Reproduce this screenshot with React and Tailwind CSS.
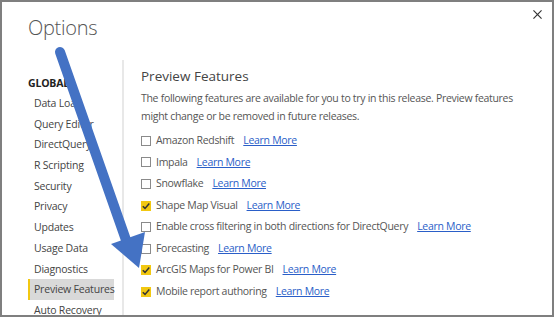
const navItems = [
  "Data Load",
  "Query Editor",
  "DirectQuery",
  "R Scripting",
  "Security",
  "Privacy",
  "Updates",
  "Usage Data",
  "Diagnostics",
  "Preview Features",
  "Auto Recovery"
];

const features = [
  { label: "Amazon Redshift", checked: false },
  { label: "Impala", checked: false },
  { label: "Snowflake", checked: false },
  { label: "Shape Map Visual", checked: true },
  { label: "Enable cross filtering in both directions for DirectQuery", checked: false },
  { label: "Forecasting", checked: false },
  { label: "ArcGIS Maps for Power BI", checked: true },
  { label: "Mobile report authoring", checked: true }
];

function Checkbox({ checked }) {
  if (checked) {
    return (
      <span className="flex h-[10px] w-[10px] shrink-0 items-center justify-center bg-[#f2c811]">
        <svg viewBox="0 0 10 10" className="h-[10px] w-[10px]">
          <path d="M1.8 5.2 L4 7.4 L8.3 2.4" fill="none" stroke="#333" strokeWidth="1.5" />
        </svg>
      </span>
    );
  }
  return <span className="h-[10px] w-[10px] shrink-0 border border-[#8a8a8a] bg-white" />;
}

export default function App() {
  return (
    <div
      className="relative h-[317px] w-[554px] overflow-hidden border-2 border-[#7f7f7f] bg-white text-[#444]"
      style={{ fontFamily: '"Open Sans", "Noto Sans", sans-serif' }}
    >
      <div className="flex h-[56px] items-start justify-between pl-[26px] pr-[8px]">
        <h1 className="pt-[12px] text-[20px] font-light leading-[28px] tracking-[-0.3px] text-[#555]">Options</h1>
        <svg viewBox="0 0 10 10" className="mr-[2px] mt-[8px] h-[9px] w-[9px]">
          <path d="M0.5 0.5 L9.5 9.5 M9.5 0.5 L0.5 9.5" stroke="#333" strokeWidth="1.3" />
        </svg>
      </div>

      <div className="flex">
        <nav className="w-[120px] shrink-0 pl-[26px] pt-[15px] tracking-[-0.2px]">
          <div className="h-[20px] text-[10.5px] font-bold leading-[20px] text-[#222]">GLOBAL</div>
          {navItems.map((item) => (
            <div
              key={item}
              className={
                item === "Preview Features"
                  ? "h-[20.7px] w-[86px] whitespace-nowrap border-l-2 border-[#f2c811] bg-[#d9d9d9] pl-[4px] text-[10.5px] leading-[20.7px] text-[#444]"
                  : "h-[20.7px] whitespace-nowrap pl-[6px] text-[10.5px] leading-[20.7px] text-[#444]"
              }
            >
              {item}
            </div>
          ))}
        </nav>

        <div className="mt-[2px] h-[260px] w-[2px] shrink-0 bg-[#e8e8e8]" />

        <section className="pl-[17px] pt-[8px]">
          <h2 className="text-[13.5px] leading-[20px] text-[#444]">Preview Features</h2>
          <p className="mt-[3px] w-[380px] text-[10.5px] leading-[18px] tracking-[-0.3px] text-[#555]">
            The following features are available for you to try in this release. Preview features might change or be
            removed in future releases.
          </p>
          <ul className="mt-[5px] tracking-[-0.3px]">
            {features.map((f) => (
              <li key={f.label} className="flex h-[21.6px] items-center">
                <Checkbox checked={f.checked} />
                <span className="ml-[5px] whitespace-nowrap text-[10.5px] text-[#555]">{f.label}</span>
                <a href="#" className="ml-[9px] whitespace-nowrap text-[10.5px] text-[#2a5ec8] underline">
                  Learn More
                </a>
              </li>
            ))}
          </ul>
        </section>
      </div>

      <svg className="pointer-events-none absolute left-0 top-0" width="554" height="317" viewBox="0 0 554 317">
        <line x1="58" y1="50" x2="124" y2="238" stroke="#4472c4" strokeWidth="10" strokeLinecap="round" />
        <polygon points="137,266 109,242 143,230" fill="#4472c4" />
      </svg>
    </div>
  );
}
